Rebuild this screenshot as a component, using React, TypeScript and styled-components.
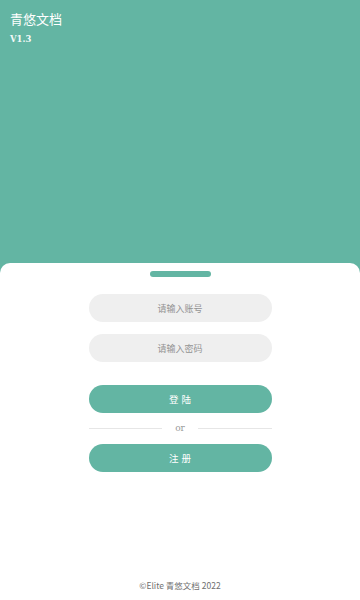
import React from "react";
import styled, { createGlobalStyle } from "styled-components";

const GREEN = "#63b5a3";

const GlobalStyle = createGlobalStyle`
  html, body {
    margin: 0;
    padding: 0;
    height: 100%;
  }
  body {
    font-family: "Noto Sans CJK SC", "Noto Sans", sans-serif;
    background: ${GREEN};
  }
  #root {
    height: 100%;
  }
`;

const Page = styled.div`
  height: 600px;
  display: flex;
  flex-direction: column;
  background: ${GREEN};
`;

const Header = styled.header`
  height: 263px;
  padding: 9px 10px 0;
  box-sizing: border-box;
  color: #fff;
`;

const Title = styled.h1`
  margin: 0;
  font-size: 13px;
  font-weight: 400;
  line-height: 20px;
`;

const Version = styled.div`
  margin-top: 4px;
  font-family: "DejaVu Serif", "Liberation Serif", serif;
  font-size: 8.5px;
  font-weight: 600;
  line-height: 12px;
  opacity: 0.92;
`;

const Sheet = styled.main`
  flex: 1;
  background: #fff;
  border-radius: 10px 10px 0 0;
  display: flex;
  flex-direction: column;
  align-items: center;
  padding-top: 8px;
`;

const Handle = styled.div`
  width: 61px;
  height: 6px;
  border-radius: 3px;
  background: ${GREEN};
`;

const Form = styled.form`
  width: 183px;
  margin-top: 17px;
  display: flex;
  flex-direction: column;
`;

const Input = styled.input`
  height: 28px;
  border: none;
  outline: none;
  border-radius: 14px;
  background: #efefef;
  text-align: center;
  font-family: inherit;
  font-size: 9px;
  color: #333;
  padding: 0;
  margin-bottom: 12px;

  &::placeholder {
    color: #939393;
  }
`;

const Button = styled.button<{ $gap?: number }>`
  height: 28px;
  border: none;
  border-radius: 14px;
  background: ${GREEN};
  color: #fff;
  font-family: inherit;
  font-size: 9.5px;
  letter-spacing: 3px;
  padding: 0 0 0 3px;
  margin-top: ${(p) => p.$gap ?? 0}px;
  cursor: pointer;
`;

const Divider = styled.div`
  height: 31px;
  display: flex;
  align-items: center;
  gap: 10px;
  color: #999;
  font-family: "DejaVu Serif", "Liberation Serif", serif;
  font-size: 9px;

  &::before,
  &::after {
    content: "";
    flex: 1;
    height: 1px;
    background: #e6e6e6;
  }
  span {
    padding: 0 3px;
    margin-top: -1px;
  }
`;

const Footer = styled.footer`
  margin-top: auto;
  padding-bottom: 9px;
  font-size: 8.5px;
  color: #6f6f6f;
`;

export default function App() {
  return (
    <>
      <GlobalStyle />
      <Page>
        <Header>
          <Title>青悠文档</Title>
          <Version>V1.3</Version>
        </Header>
        <Sheet>
          <Handle />
          <Form onSubmit={(e) => e.preventDefault()}>
            <Input placeholder="请输入账号" />
            <Input type="password" placeholder="请输入密码" />
            <Button type="submit" $gap={11}>登陆</Button>
            <Divider>
              <span>or</span>
            </Divider>
            <Button type="button">注册</Button>
          </Form>
          <Footer>©Elite 青悠文档 2022</Footer>
        </Sheet>
      </Page>
    </>
  );
}
